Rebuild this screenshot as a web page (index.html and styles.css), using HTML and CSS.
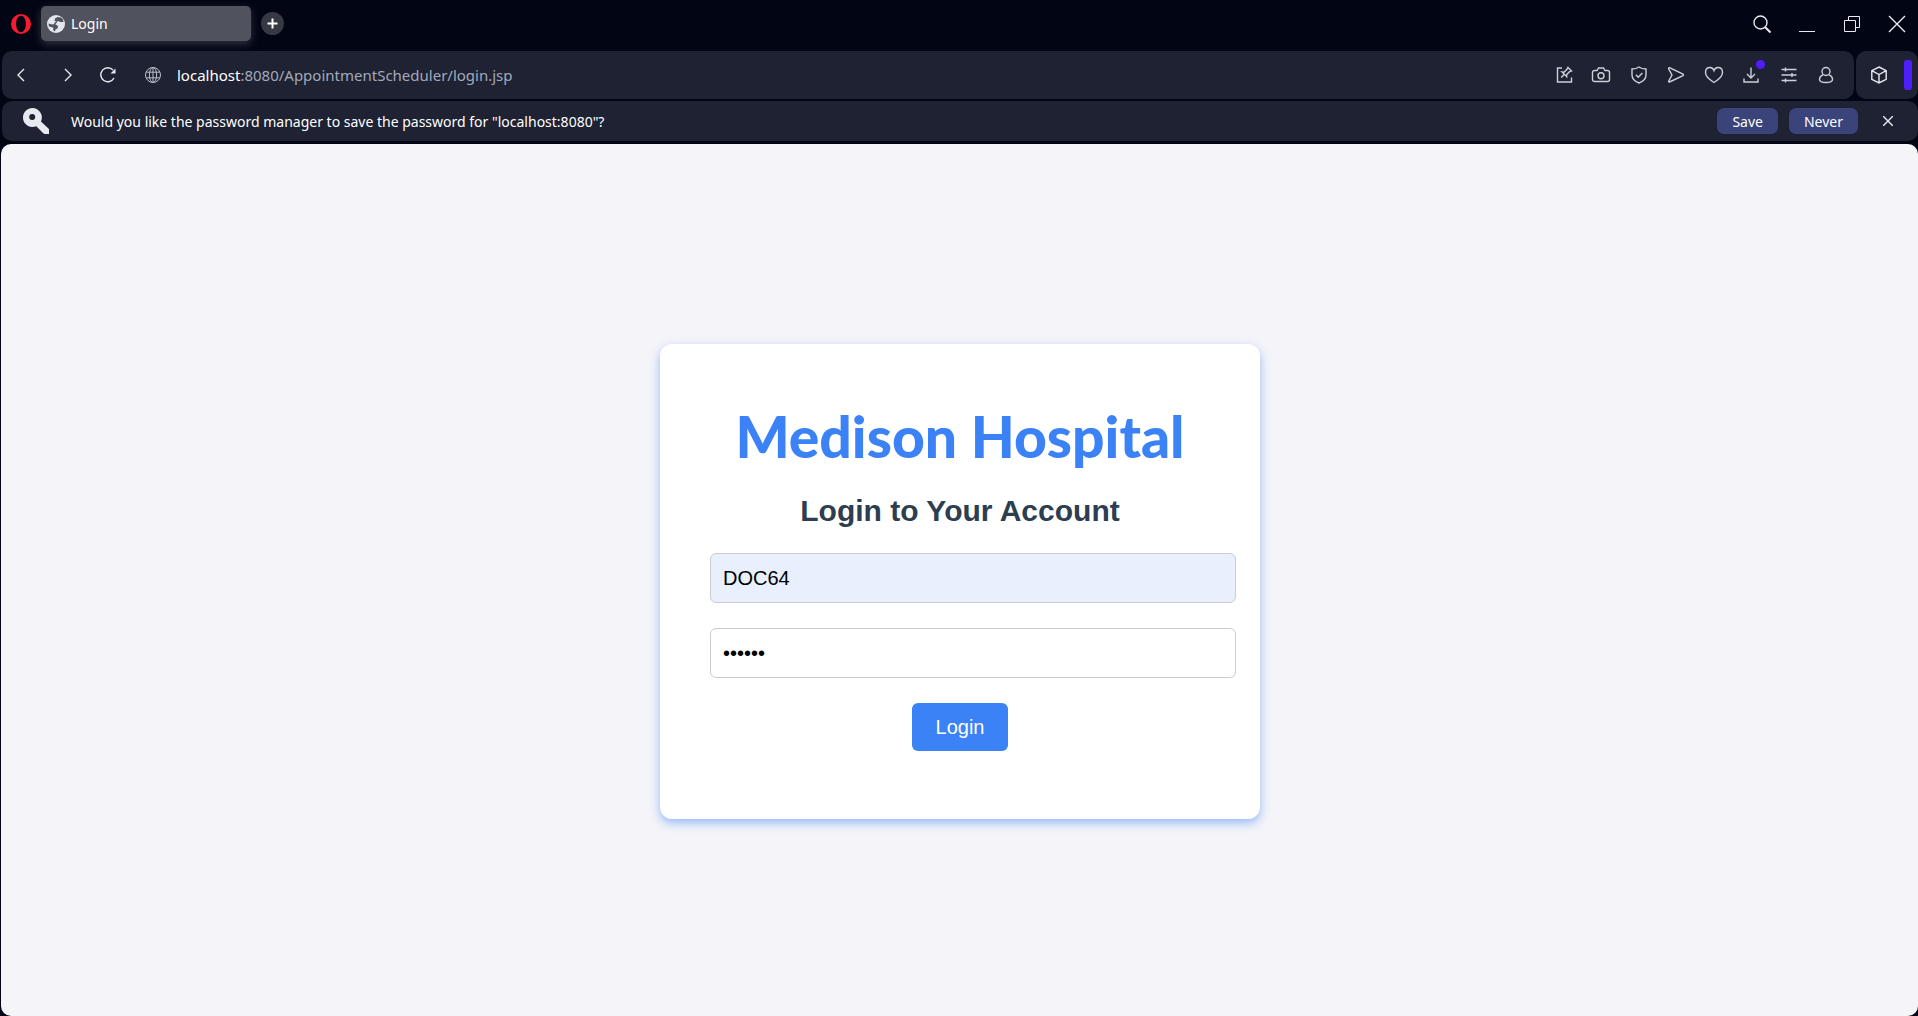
FILE: index.html
```html
<!DOCTYPE html>
<html lang="en">
<head>
<meta charset="utf-8">
<title>Login</title>
<link rel="stylesheet" href="styles.css">
</head>
<body>
<header class="tabbar">
  <button class="icon-btn opera" aria-label="Opera menu"><svg width="20" height="20" viewBox="0 0 20 20"><path fill="#fb1a2c" fill-rule="evenodd" d="M10 0a10 10 0 1 0 0 20 10 10 0 0 0 0-20Zm0 1.800c2.800 0 4.900 3.500 4.900 8.200s-2.100 8.200-4.900 8.200-4.900-3.500-4.900-8.200 2.100-8.200 4.900-8.200Z"/></svg></button>
  <div class="tab">
    <svg width="18" height="18" viewBox="0 0 18 18"><circle cx="9" cy="9" r="9" fill="#e3e7ec"/><path d="M10.500 2 8 3.500l-.5 2L9.500 7l2-1 1.500 1h3.500l-.5-2.500-2-2ZM1.500 8.500 5 9.500l3-.5 3 2-.5 2.500-2 1-.5 2-2-1.500.5-2-2-1-2.500-.5Z" fill="#50525d"/><path d="m9.500 7-2 2" stroke="#50525d" stroke-width="1.500"/></svg>
    <span>Login</span>
  </div>
  <button class="new-tab" aria-label="New tab"><svg width="11" height="11" viewBox="0 0 11 11"><path d="M5.500 .5v10M.5 5.500h10" stroke="#fff" stroke-width="2"/></svg></button>
  <div class="window-controls">
    <button class="icon-btn" aria-label="Search tabs"><svg width="20" height="20" viewBox="0 0 20 20"><circle cx="8.500" cy="8.500" r="6.500"/><path d="m13.200 13.200 5.300 5.300" stroke-width="2"/></svg></button>
    <button class="icon-btn" aria-label="Minimize"><svg width="20" height="20" viewBox="0 0 20 20"><path d="M2 17.500h16" stroke-width="1"/></svg></button>
    <button class="icon-btn" aria-label="Restore"><svg width="20" height="20" viewBox="0 0 20 20"><path d="M2.500 6.500h11v11h-11zM6.500 6.500v-4h11v11h-4" stroke-width="1"/></svg></button>
    <button class="icon-btn" aria-label="Close window"><svg width="20" height="20" viewBox="0 0 20 20"><path d="m2 2 16 16M18 2 2 18"/></svg></button>
  </div>
</header>
<div class="toolrow">
  <nav class="toolbar">
    <button class="icon-btn" aria-label="Back"><svg width="20" height="20" viewBox="0 0 20 20"><path d="m13 4-6 6 6 6"/></svg></button>
    <button class="icon-btn forward" aria-label="Forward"><svg width="20" height="20" viewBox="0 0 20 20"><path d="m7 4 6 6-6 6"/></svg></button>
    <button class="icon-btn reload" aria-label="Reload"><svg width="20" height="20" viewBox="0 0 20 20"><path d="M16 13a7 7 0 1 1-1-8"/><path d="M17.500 3.500v5h-5z" fill="#e8ebf0" stroke="none"/></svg></button>
    <svg class="site" width="18" height="18" viewBox="0 0 18 18"><circle cx="9" cy="9" r="7.500"/><ellipse cx="9" cy="9" rx="3.600" ry="7.500"/><path d="M9 1.500v15M2.300 6.200h13.400M2.300 11.800h13.400"/></svg>
    <p class="url"><span class="host">localhost</span>:8080/AppointmentScheduler/login.jsp</p>
    <div class="actions">
      <button class="icon-btn" aria-label="Edit page"><svg width="20" height="20" viewBox="0 0 20 20"><path d="M8 3H3.500v14h14v-4.500"/><path d="m14 2.500 3.500 3.500-2 .7-3 3 .2 2-4.700-4.700 2 .2 3-3ZM10.200 9.300l-3 3.200"/></svg></button>
      <button class="icon-btn" aria-label="Snapshot"><svg width="20" height="20" viewBox="0 0 20 20"><path d="M3.500 5.500H6L7.500 3h5L14 5.500h2.500a2 2 0 0 1 2 2v7a2 2 0 0 1-2 2h-13a2 2 0 0 1-2-2v-7a2 2 0 0 1 2-2Z"/><circle cx="10" cy="10.700" r="3"/></svg></button>
      <button class="icon-btn" aria-label="Site protection"><svg width="20" height="20" viewBox="0 0 20 20"><path d="M10 2c2 1.500 4.500 2 7 2v6c0 4-3 6.500-7 8-4-1.500-7-4-7-8V4c2.500 0 5-.5 7-2Z"/><path d="m6.800 9.800 2.400 2.400 4.200-4.200"/></svg></button>
      <button class="icon-btn" aria-label="Send to device"><svg width="20" height="20" viewBox="0 0 20 20"><path d="M3.500 2.700 17 9q1 .8 0 1.600L3.500 17q-1.200.3-.8-1L6 10 2.700 4q-.4-1.400.8-1.300Z"/></svg></button>
      <button class="icon-btn" aria-label="Bookmark"><svg width="20" height="20" viewBox="0 0 20 20"><path d="M10 5.500c-1.500-4.500-8.500-4-8.500 2 0 4 4.500 7.500 8.500 10 4-2.500 8.500-6 8.500-10 0-6-7-6.500-8.500-2Z"/></svg></button>
      <button class="icon-btn download" aria-label="Downloads"><svg width="20" height="20" viewBox="0 0 20 20"><path d="M10 2.500v10M6 9l4 4 4-4M3 13.500V17h14v-3.500"/></svg><span class="dot"></span></button>
      <button class="icon-btn" aria-label="Easy setup"><svg width="20" height="20" viewBox="0 0 20 20"><path d="M2.500 4.500h15M2.500 10h15M2.500 15.500h15M6.500 2.500v4M13 8v4M6.500 13.500v4"/></svg></button>
      <button class="icon-btn" aria-label="Profile"><svg width="20" height="20" viewBox="0 0 20 20"><circle cx="10" cy="6.500" r="4"/><path d="M7 10c-2.500.8-3.500 2.300-3.500 4.500Q3.500 17.500 10 17.500t6.500-3c0-2.200-1-3.700-3.500-4.500"/></svg></button>
    </div>
  </nav>
  <aside class="sidebar-toggle">
    <button class="icon-btn" aria-label="Extensions"><svg width="20" height="20" viewBox="0 0 20 20"><path d="m10 2 7.200 3.600v8.800L10 18l-7.200-3.600V5.600ZM2.800 5.600 10 9.500l7.200-3.900M10 9.500V18"/></svg></button>
    <span class="handle"></span>
  </aside>
</div>
<section class="infobar" aria-label="Password manager">
  <svg width="26" height="26" viewBox="0 0 26 26"><path fill="#e6eaf0" fill-rule="evenodd" d="M9.500 0a9.500 9.500 0 1 0 3.800 18.200L20 25q1 1 2 1h4v-5L17.900 13.600A9.500 9.500 0 0 0 9.500 0Zm-.3 6a3 3 0 1 1 0 6 3 3 0 0 1 0-6Z"/></svg>
  <p>Would you like the password manager to save the password for "localhost:8080"?</p>
  <button class="info-btn">Save</button>
  <button class="info-btn">Never</button>
  <button class="icon-btn dismiss" aria-label="Dismiss"><svg width="10" height="10" viewBox="0 0 10 10"><path d="m0 0 10 10M10 0 0 10"/></svg></button>
</section>
<main class="page">
  <form class="card">
    <h1>Medison Hospital</h1>
    <h2>Login to Your Account</h2>
    <input class="field filled" type="text" aria-label="Username" value="DOC64">
    <input class="field" type="password" aria-label="Password" value="doctor">
    <button class="login" type="button">Login</button>
  </form>
</main>
</body>
</html>
```
FILE: styles.css
```css
* { box-sizing: border-box; }
body {
  margin: 0;
  min-height: 100vh;
  display: flex;
  flex-direction: column;
  background: #020514;
  color: #fff;
  font-family: "Segoe UI", "Noto Sans", sans-serif;
  font-size: 14px;
}
p, h1, h2 { margin: 0; }
button { border: 0; padding: 0; font: inherit; color: inherit; }
svg { display: block; flex: none; }

.icon-btn {
  position: relative;
  display: flex;
  flex: none;
  background: none;
}
.icon-btn svg, .site {
  fill: none;
  stroke: #e8ebf0;
  stroke-width: 1.4;
}
.icon-btn.opera svg { stroke: none; }

.tabbar {
  display: flex;
  align-items: center;
  height: 51px;
  padding: 0 11px 4px;
}
.tab {
  display: flex;
  align-items: center;
  gap: 6px;
  width: 210px;
  height: 35px;
  margin: 0 10px;
  padding: 0 6px;
  border-radius: 5px;
  background: #50525d;
  box-shadow: 0 3px 8px #32333f;
}
.new-tab {
  display: grid;
  place-items: center;
  width: 23px;
  height: 23px;
  border-radius: 50%;
  background: #363844;
}
.window-controls {
  display: flex;
  gap: 25px;
  margin-left: auto;
}

.toolrow {
  display: flex;
  gap: 2px;
  margin-left: 2px;
}
.toolbar, .sidebar-toggle, .infobar {
  display: flex;
  align-items: center;
  border-radius: 10px;
  background: #1e2233;
}
.toolbar {
  flex: 1;
  height: 48px;
  padding: 0 18px 0 9px;
}
.forward { margin-left: 27px; }
.reload { margin-left: 20px; }
.site { margin: 0 15px 0 26px; stroke: #b9bec9; stroke-width: 1; }
.url { font-size: 15px; color: #a3aab9; }
.host { color: #fff; }
.actions {
  display: flex;
  justify-content: space-between;
  width: 282px;
  margin-left: auto;
}
.actions .icon-btn svg { stroke: #ccd0d8; }
.dot {
  position: absolute;
  top: -5px;
  right: -4px;
  width: 9px;
  height: 9px;
  border-radius: 50%;
  background: #4d1fff;
}
.sidebar-toggle {
  justify-content: space-between;
  width: 62px;
  padding: 0 6px 0 13px;
}
.handle {
  width: 8px;
  height: 30px;
  border-radius: 3px;
  background: #4d1fff;
}

.infobar {
  height: 40px;
  margin: 2px 0 3px 2px;
  padding: 0 25px 0 21px;
}
.infobar p { margin: 0 auto 0 22px; }
.info-btn {
  height: 26px;
  margin-right: 11px;
  padding: 0 15px;
  border-radius: 7px;
  background: #3a447b;
}
.dismiss { margin-left: 14px; }

.page {
  flex: 1;
  display: grid;
  place-items: center;
  margin-left: 1px;
  padding: 2px 0 0 1px;
  border-radius: 10px;
  background: #f4f4f9;
  font-family: Arial, "Liberation Sans", sans-serif;
}
.card {
  display: flex;
  flex-direction: column;
  align-items: center;
  width: 600px;
  padding: 50px 50px 68px;
  border-radius: 12px;
  background: #fff;
  box-shadow: 0 4px 10px #3b82f680;
}
h1 {
  margin-bottom: 15px;
  font: 900 57px/84px "Comic Sans MS", Lato, cursive;
  color: #3b82f6;
  white-space: nowrap;
}
h2 {
  margin-bottom: 24px;
  font-size: 30px;
  line-height: 36px;
  color: #2c3e50;
}
.field {
  box-sizing: content-box;
  align-self: flex-start;
  width: 100%;
  height: 24px;
  margin: 0 0 25px;
  padding: 12px;
  border: 1px solid #ccc;
  border-radius: 6px;
  background: #fff;
  font: 20px/24px Arial, "Liberation Sans", sans-serif;
  color: #000;
}
.filled { background: #e8f0fe; }
.login {
  padding: 12px 24px;
  border-radius: 6px;
  background: #3b82f6;
  font-size: 20px;
  line-height: 24px;
}
```
